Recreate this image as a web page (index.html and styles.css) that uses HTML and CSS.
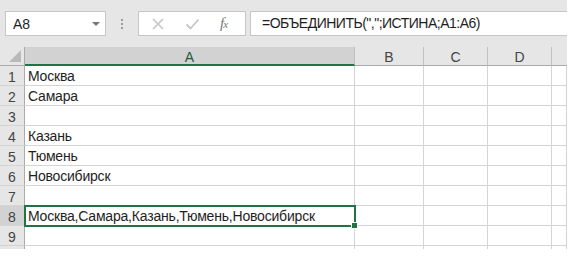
FILE: index.html
```html
<!DOCTYPE html>
<html lang="ru">
<head>
  <meta charset="UTF-8">
  <title>Excel - ОБЪЕДИНИТЬ</title>
  <link rel="stylesheet" href="styles.css">
</head>
<body>
  <div class="app">
    <div class="toolbar">
      <div class="namebox">
        <span>A8</span>
        <span class="arrow"></span>
      </div>
      <div class="grip"><i></i><i></i><i></i></div>
      <div class="funcbox">
        <svg class="ico" width="14" height="14" viewBox="0 0 14 14">
          <path d="M2 2 L12 12 M12 2 L2 12" stroke="#c6c6c6" stroke-width="1.6" fill="none"/>
        </svg>
        <svg class="ico" width="15" height="14" viewBox="0 0 15 14">
          <path d="M1.5 7.5 L5.5 11.5 L13.5 2.5" stroke="#c6c6c6" stroke-width="1.8" fill="none"/>
        </svg>
        <span class="fx">f<sub>x</sub></span>
      </div>
      <div class="formula">=ОБЪЕДИНИТЬ(",";ИСТИНА;A1:A6)</div>
    </div>

    <div class="sheet">
      <div class="hd corner"><span class="tri"></span></div>
      <div class="hd col active">A</div>
      <div class="hd col">B</div>
      <div class="hd col">C</div>
      <div class="hd col">D</div>
      <div class="hd col last"></div>

      <div class="hd row">1</div><div class="cell">Москва</div><div class="cell"></div><div class="cell"></div><div class="cell"></div><div class="cell"></div>
      <div class="hd row">2</div><div class="cell">Самара</div><div class="cell"></div><div class="cell"></div><div class="cell"></div><div class="cell"></div>
      <div class="hd row">3</div><div class="cell"></div><div class="cell"></div><div class="cell"></div><div class="cell"></div><div class="cell"></div>
      <div class="hd row">4</div><div class="cell">Казань</div><div class="cell"></div><div class="cell"></div><div class="cell"></div><div class="cell"></div>
      <div class="hd row">5</div><div class="cell">Тюмень</div><div class="cell"></div><div class="cell"></div><div class="cell"></div><div class="cell"></div>
      <div class="hd row">6</div><div class="cell">Новосибирск</div><div class="cell"></div><div class="cell"></div><div class="cell"></div><div class="cell"></div>
      <div class="hd row">7</div><div class="cell"></div><div class="cell"></div><div class="cell"></div><div class="cell"></div><div class="cell"></div>
      <div class="hd row active">8</div><div class="cell selected">Москва,Самара,Казань,Тюмень,Новосибирск<span class="handle"></span></div><div class="cell"></div><div class="cell"></div><div class="cell"></div><div class="cell"></div>
      <div class="hd row">9</div><div class="cell"></div><div class="cell"></div><div class="cell"></div><div class="cell"></div><div class="cell"></div>
      <div class="hd row">10</div><div class="cell"></div><div class="cell"></div><div class="cell"></div><div class="cell"></div><div class="cell"></div>
    </div>
  </div>
</body>
</html>
```

FILE: styles.css
```css
body {
  margin: 0;
  background: #fff;
  font-family: 'Liberation Sans', Arial, sans-serif;
  color: #1e1e1e;
}
.app {
  width: 567px;
  height: 249px;
  background: #e6e6e6;
  overflow: hidden;
}
.toolbar {
  height: 47px;
  display: flex;
  align-items: flex-start;
  padding: 11px 0 0 5px;
  box-sizing: border-box;
}
.namebox {
  width: 101px;
  height: 25px;
  box-sizing: border-box;
  background: #fff;
  border: 1px solid #c6c6c6;
  display: flex;
  align-items: center;
  justify-content: space-between;
  padding: 0 5px 0 7px;
  font-size: 14px;
}
.arrow {
  border-left: 4px solid transparent;
  border-right: 4px solid transparent;
  border-top: 4px solid #777;
}
.grip {
  width: 32px;
  height: 25px;
  display: flex;
  flex-direction: column;
  align-items: center;
  justify-content: center;
  gap: 2px;
}
.grip i {
  width: 2px;
  height: 2px;
  background: #9a9a9a;
}
.funcbox {
  width: 108px;
  height: 25px;
  box-sizing: border-box;
  background: #fff;
  border: 1px solid #c6c6c6;
  display: flex;
  align-items: center;
  padding-left: 12px;
  gap: 20px;
}
.fx {
  font-family: 'Liberation Serif', serif;
  font-style: italic;
  font-size: 15px;
  color: #7a7a7a;
}
.fx sub {
  font-size: 11px;
  vertical-align: 0;
  margin-left: -1px;
}
.formula {
  flex: 1;
  height: 25px;
  margin-left: 4px;
  box-sizing: border-box;
  background: #fff;
  border: 1px solid #c6c6c6;
  border-right: none;
  font-size: 14px;
  letter-spacing: -0.5px;
  line-height: 23px;
  padding-left: 11px;
}
.sheet {
  display: grid;
  grid-template-columns: 25px 330px 69px 64px 64px 15px;
  grid-template-rows: 19px repeat(10, 20px);
  background: #fff;
}
.hd {
  background: #e6e6e6;
  font-size: 14px;
  color: #444;
  box-sizing: border-box;
  display: flex;
  align-items: center;
  justify-content: center;
}
.corner {
  position: relative;
  border-right: 1px solid #ababab;
  border-bottom: 1px solid #ababab;
}
.tri {
  position: absolute;
  right: 3px;
  bottom: 3px;
  border-left: 12px solid transparent;
  border-bottom: 12px solid #b9b9b9;
}
.col {
  border-right: 1px solid #c0c0c0;
  border-bottom: 1px solid #ababab;
  padding-top: 2px;
}
.col.last {
  border-right: none;
}
.col.active {
  background: #d2d2d2;
  border-bottom: 2px solid #217346;
  color: #1e5c3a;
}
.row {
  border-right: 1px solid #ababab;
  border-bottom: 1px solid #d4d4d4;
  padding-top: 2px;
}
.row.active {
  background: #d2d2d2;
}
.cell {
  border-right: 1px solid #d4d4d4;
  border-bottom: 1px solid #d4d4d4;
  box-sizing: border-box;
  font-size: 14px;
  letter-spacing: -0.2px;
  padding: 2px 0 0 3px;
  line-height: 17px;
  white-space: nowrap;
}
.cell.selected {
  position: relative;
  outline: 2px solid #217346;
  outline-offset: -1px;
  z-index: 1;
}
.handle {
  position: absolute;
  right: -4px;
  bottom: -4px;
  width: 5px;
  height: 5px;
  background: #217346;
  border: 1px solid #fff;
}
```
